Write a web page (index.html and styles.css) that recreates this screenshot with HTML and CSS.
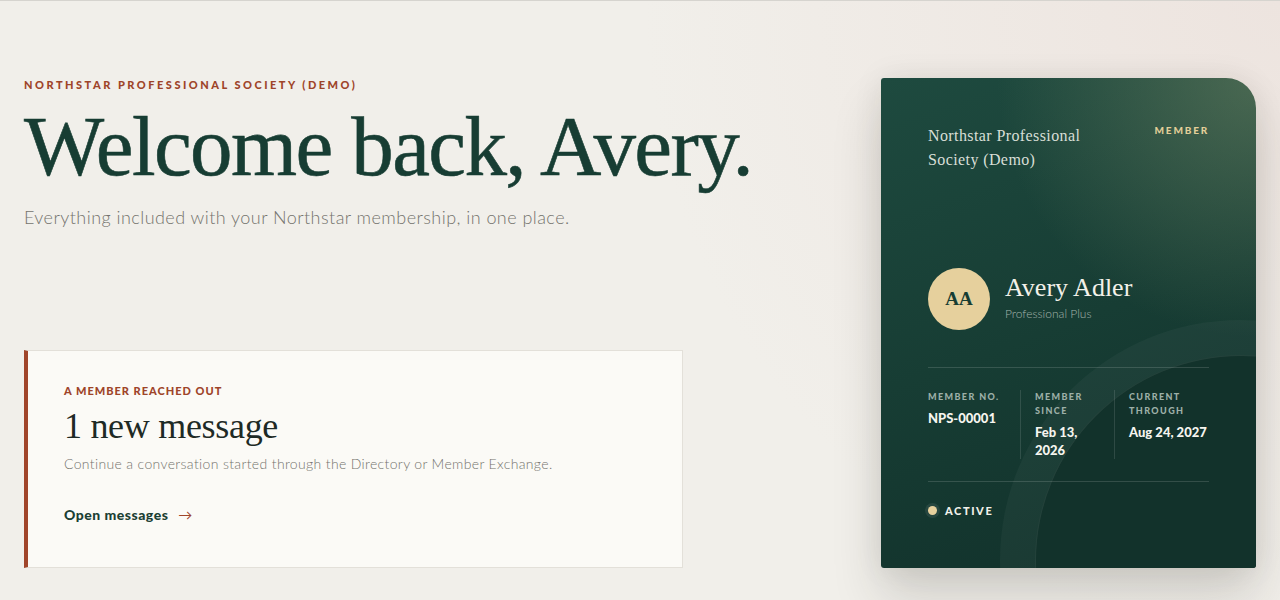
FILE: index.html
```html
<html>
  <head>
    <link rel="stylesheet" href="styles.css">
  </head>
  <body>
    <div class="page">
      <div class="left">
        <div class="intro">
          <p class="eyebrow">Northstar Professional Society (Demo)</p>
          <h1>Welcome back, Avery.</h1>
          <p class="lede">Everything included with your Northstar membership, in one place.</p>
        </div>
        <div class="notice">
          <p class="notice-kicker">A member reached out</p>
          <h2>1 new message</h2>
          <p class="notice-text">Continue a conversation started through the Directory or Member Exchange.</p>
          <a class="notice-link" href="#">Open messages <span class="arrow">&rarr;</span></a>
        </div>
      </div>
      <div class="member-card">
        <div class="card-top">
          <p class="org">Northstar Professional Society (Demo)</p>
          <span class="tier">Member</span>
        </div>
        <div class="person">
          <div class="avatar">AA</div>
          <div>
            <p class="name">Avery Adler</p>
            <p class="plan">Professional Plus</p>
          </div>
        </div>
        <div class="stats">
          <div class="stat">
            <p class="stat-label">Member no.</p>
            <p class="stat-value">NPS-00001</p>
          </div>
          <div class="stat">
            <p class="stat-label">Member since</p>
            <p class="stat-value">Feb 13, 2026</p>
          </div>
          <div class="stat">
            <p class="stat-label">Current through</p>
            <p class="stat-value">Aug 24, 2027</p>
          </div>
        </div>
        <div class="status">
          <span class="dot"></span>
          <span>Active</span>
        </div>
      </div>
    </div>
  </body>
</html>
```

FILE: styles.css
```css
* {
  box-sizing: border-box;
}

body {
  margin: 0;
  min-height: 600px;
  border-top: 1px solid #d6d4cf;
  background: radial-gradient(circle at 100% 0%, #ede4df 0%, rgba(237, 228, 223, 0) 45%), #f1efea;
  font-family: Lato, "Noto Sans", sans-serif;
  overflow: hidden;
}

p, h1, h2 {
  margin: 0;
}

.page {
  display: flex;
  justify-content: space-between;
  padding: 77px 24px 0;
}

.left {
  flex: 1;
}

.eyebrow {
  font-size: 11px;
  line-height: 14px;
  font-weight: 900;
  letter-spacing: 2.5px;
  text-transform: uppercase;
  color: #9e4429;
}

h1 {
  margin-top: 12px;
  font-family: "Liberation Serif", serif;
  font-weight: 400;
  font-size: 85px;
  line-height: 84px;
  letter-spacing: -1.6px;
  color: #173d33;
  white-space: nowrap;
  -webkit-text-stroke: 0.6px #173d33;
}

.lede {
  margin-top: 16px;
  font-size: 18px;
  font-weight: 300;
  line-height: 26px;
  letter-spacing: 0.45px;
  color: #74736d;
}

.notice {
  width: 659px;
  margin-top: 120px;
  padding: 33px 40px 44px 36px;
  background: #fbfaf6;
  border: 1px solid #e3e0d9;
  border-left: 4px solid #a0452a;
}

.notice-kicker {
  font-size: 11px;
  line-height: 14px;
  font-weight: 900;
  letter-spacing: 1px;
  text-transform: uppercase;
  color: #9e4429;
}

h2 {
  margin-top: 8px;
  font-family: "Liberation Serif", serif;
  font-weight: 400;
  font-size: 36px;
  line-height: 40px;
  letter-spacing: -0.3px;
  color: #1e2a25;
}

.notice-text {
  margin-top: 8px;
  font-size: 14px;
  font-weight: 300;
  line-height: 20px;
  letter-spacing: 0.35px;
  color: #74736d;
}

.notice-link {
  display: inline-block;
  margin-top: 32px;
  font-size: 14px;
  font-weight: 900;
  letter-spacing: 0.5px;
  color: #1b4034;
  text-decoration: none;
}

.arrow {
  margin-left: 6px;
  font-weight: 400;
  color: #a0452a;
}

.member-card {
  position: relative;
  overflow: hidden;
  width: 375px;
  height: 490px;
  padding: 47px 47px;
  border-radius: 3px 30px 3px 3px;
  background:
    radial-gradient(circle at 100% 0%, rgba(120, 140, 105, 0.5) 0%, rgba(120, 140, 105, 0) 42%),
    linear-gradient(160deg, #1e4a3f 0%, #173d34 50%, #11302a 100%);
  box-shadow: 0 30px 50px rgba(40, 40, 30, 0.16), 0 0 30px rgba(40, 40, 30, 0.08);
  color: #eef0ea;
}

.member-card::before,
.member-card::after {
  content: "";
  position: absolute;
  border-radius: 50%;
}

.member-card::before {
  left: 119px;
  top: 242px;
  width: 480px;
  height: 480px;
  background: rgba(255, 255, 255, 0.035);
}

.member-card::after {
  left: 154px;
  top: 277px;
  width: 410px;
  height: 410px;
  background: #12322b;
  border: 1px solid rgba(255, 255, 255, 0.08);
}

.card-top,
.person,
.stats,
.status {
  position: relative;
  z-index: 1;
}

.card-top {
  display: flex;
  justify-content: space-between;
  align-items: flex-start;
}

.org {
  width: 190px;
  margin-top: -1px;
  font-family: "Liberation Serif", serif;
  font-size: 16px;
  line-height: 24px;
  letter-spacing: 0.4px;
  color: #d8dfd7;
}

.tier {
  margin-top: -2px;
  font-size: 10px;
  line-height: 14px;
  font-weight: 900;
  letter-spacing: 1.8px;
  text-transform: uppercase;
  color: #e2cf99;
}

.person {
  display: flex;
  align-items: center;
  gap: 15px;
  margin-top: 96px;
  padding-bottom: 37px;
  border-bottom: 1px solid rgba(255, 255, 255, 0.14);
}

.avatar {
  display: flex;
  align-items: center;
  justify-content: center;
  width: 62px;
  height: 62px;
  border-radius: 50%;
  background: #e6d09d;
  font-family: "Liberation Serif", serif;
  font-weight: 700;
  font-size: 19px;
  color: #173d33;
}

.name {
  margin-top: -6px;
  font-family: "Liberation Serif", serif;
  font-size: 26px;
  line-height: 32px;
  color: #f3f1e9;
}

.plan {
  margin-top: 2px;
  font-size: 12px;
  font-weight: 300;
  color: #a2b3ab;
}

.stats {
  display: flex;
  padding: 22px 0 22px;
  border-bottom: 1px solid rgba(255, 255, 255, 0.14);
}

.stat {
  padding: 0 14px;
  border-left: 1px solid rgba(255, 255, 255, 0.12);
}

.stat:first-child {
  width: 92px;
  padding-left: 0;
  border-left: none;
}

.stat:nth-child(2) {
  width: 94px;
}

.stat:last-child {
  flex: 1;
  padding-right: 0;
}

.stat-label {
  font-size: 9px;
  line-height: 14px;
  font-weight: 900;
  letter-spacing: 1.4px;
  text-transform: uppercase;
  color: #9db0a8;
}

.stat-value {
  margin-top: 5px;
  font-size: 13px;
  line-height: 18px;
  font-weight: 900;
  color: #f6f5ef;
}

.status {
  display: flex;
  align-items: center;
  gap: 8px;
  margin-top: 22px;
  font-size: 11px;
  font-weight: 900;
  letter-spacing: 1.6px;
  text-transform: uppercase;
  color: #f1f1ea;
}

.dot {
  width: 9px;
  height: 9px;
  border-radius: 50%;
  background: #e6d09d;
  box-shadow: 0 0 0 3px rgba(255, 255, 255, 0.08);
}
```
